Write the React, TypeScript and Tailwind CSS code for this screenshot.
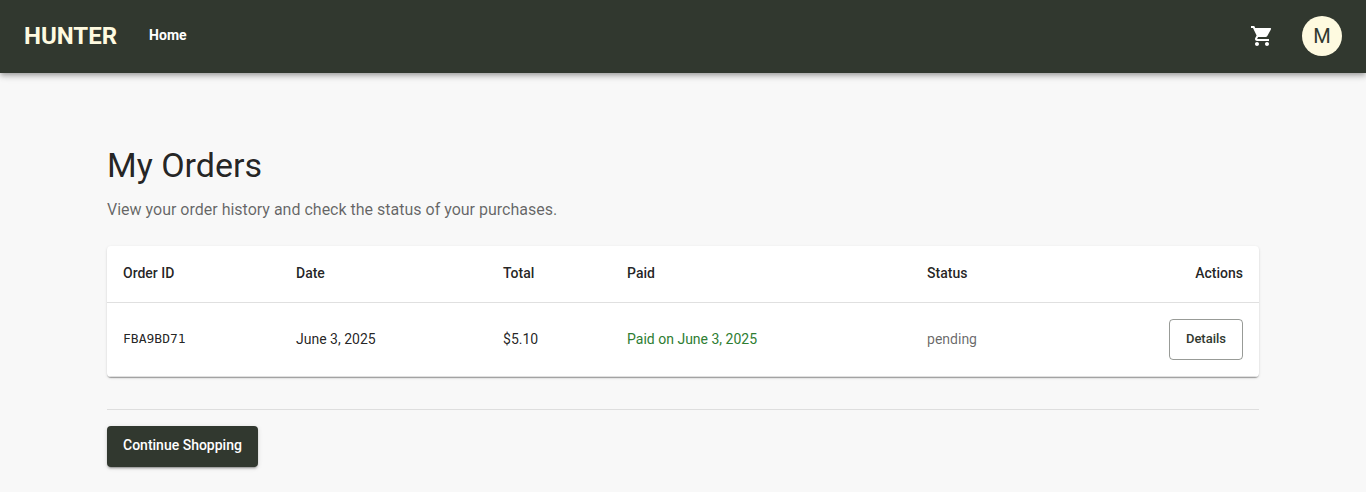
import React from "react";
import { MdShoppingCart } from "react-icons/md";

type Order = { id: string; date: string; total: string; paid: string; status: string };

const orders: Order[] = [
  { id: "FBA9BD71", date: "June 3, 2025", total: "$5.10", paid: "Paid on June 3, 2025", status: "pending" },
];

export default function App() {
  return (
    <div className="min-h-screen bg-[#f8f8f8] font-[Roboto,sans-serif] text-black/87">
      <header className="flex items-center bg-[#31382f] px-6 pt-4 pb-[17px] text-white shadow-[0_2px_4px_-1px_rgba(0,0,0,0.2),0_4px_5px_0_rgba(0,0,0,0.14),0_1px_10px_0_rgba(0,0,0,0.12)]">
        <a href="#" className="text-2xl font-bold text-[#fefae0]">HUNTER</a>
        <nav className="ml-8 pb-0.5">
          <a href="#" className="block text-sm font-bold">Home</a>
        </nav>
        <div className="ml-auto flex items-center gap-7">
          <button type="button" aria-label="Cart">
            <MdShoppingCart className="size-6" />
          </button>
          <button type="button" className="flex size-10 items-center justify-center rounded-full bg-[#fefae0] text-xl text-[#31382f]">M</button>
        </div>
      </header>
      <main className="mx-auto max-w-[1200px] px-6 pt-[71px]">
        <h1 className="text-[34px] leading-[42px]">My Orders</h1>
        <p className="mt-3 text-base text-black/60">View your order history and check the status of your purchases.</p>
        <div className="mt-6 overflow-x-auto rounded bg-white shadow-[0_2px_1px_-1px_rgba(0,0,0,0.2),0_1px_1px_0_rgba(0,0,0,0.14),0_1px_3px_0_rgba(0,0,0,0.12)]">
          <table className="w-full table-fixed border-separate border-spacing-0 text-left text-sm leading-6 [&_td]:border-b [&_td]:border-[#e0e0e0] [&_td]:px-4 [&_td]:pt-4 [&_td]:pb-[18px] [&_td:last-child]:pb-4 [&_th]:border-b [&_th]:border-[#e0e0e0] [&_th]:px-4 [&_th]:pt-[15px] [&_th]:pb-[17px] [&_th]:font-medium">
            <colgroup>
              <col className="w-[15.02%]" />
              <col className="w-[17.97%]" />
              <col className="w-[10.77%]" />
              <col className="w-[26.04%]" />
              <col className="w-[18.4%]" />
              <col className="w-[11.8%]" />
            </colgroup>
            <thead>
              <tr>
                <th>Order ID</th>
                <th>Date</th>
                <th>Total</th>
                <th>Paid</th>
                <th>Status</th>
                <th className="text-right">Actions</th>
              </tr>
            </thead>
            <tbody>
              {orders.map((o) => (
                <tr key={o.id}>
                  <td className="font-['DejaVu_Sans_Mono',monospace] text-[13px]">{o.id}</td>
                  <td>{o.date}</td>
                  <td>{o.total}</td>
                  <td className="text-[#2e7d32]">{o.paid}</td>
                  <td className="text-black/60">{o.status}</td>
                  <td className="text-right">
                    <button type="button" className="ml-auto block h-[41px] rounded border border-[#31382f]/50 px-4 pb-0.5 text-[13px] font-medium text-[#31382f]">Details</button>
                  </td>
                </tr>
              ))}
            </tbody>
          </table>
        </div>
        <hr className="mt-8 border-[#dedede]" />
        <button type="button" className="mt-4 h-[41px] rounded bg-[#31382f] px-4 pb-1 text-sm font-medium text-white shadow-[0_3px_1px_-2px_rgba(0,0,0,0.2),0_2px_2px_0_rgba(0,0,0,0.14),0_1px_5px_0_rgba(0,0,0,0.12)]">
          Continue Shopping
        </button>
      </main>
    </div>
  );
}
